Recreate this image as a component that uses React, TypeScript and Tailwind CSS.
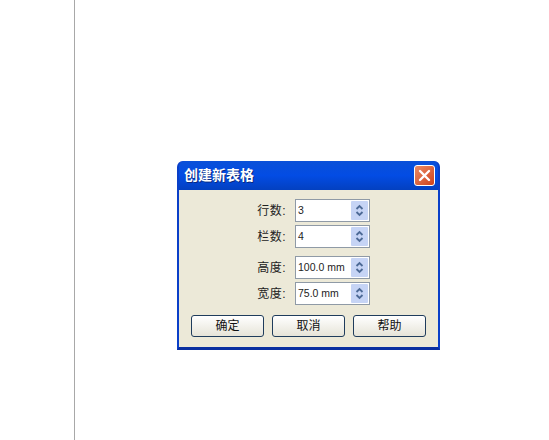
const sans = { fontFamily: '"Liberation Sans", "Noto Sans CJK SC", sans-serif' };

function Spinner() {
  return (
    <div className="w-[17px] h-[19px] bg-[#c6d4f5] rounded-[1px] flex items-center justify-center">
      <svg width="11" height="15" viewBox="0 0 11 15" fill="none" stroke="#4d6a96" strokeWidth="1.8">
        <path d="M2.5 6 L5.5 3 L8.5 6" />
        <path d="M2.5 9 L5.5 12 L8.5 9" />
      </svg>
    </div>
  );
}

function Field({ label, value, className }: { label: string; value: string; className?: string }) {
  return (
    <div className={'flex items-center h-[23px] ' + (className ?? '')}>
      <span className="w-[107px] text-right text-[12px] text-[#222] tracking-[0.5px]">{label}:</span>
      <div className="ml-[9px] w-[75px] h-[23px] bg-white border border-[#8f9aa6] flex items-center justify-between pl-[2px] pr-[1px]">
        <span className="text-[10.5px] text-[#222]">{value}</span>
        <Spinner />
      </div>
    </div>
  );
}

function Button({ label }: { label: string }) {
  return (
    <button className="w-[73px] h-[22px] rounded-[3px] border border-[#1f3c5c] bg-gradient-to-b from-white to-[#e6e4d8] text-[12px] text-[#111]">
      {label}
    </button>
  );
}

export default function App() {
  return (
    <div className="w-[549px] h-[440px] bg-white flex overflow-hidden" style={sans}>
      <div className="ml-[74px] w-px h-full bg-[#a8a8a8]" />
      <div className="ml-[102px] mt-[161px] w-[263px] h-[189px] flex flex-col rounded-t-[6px] bg-[#0a45d8] border-x-[2px] border-b-[3px] border-x-[#0a3fc8] border-b-[#0a2fa0]">
        <div className="h-[29px] flex items-center justify-between pl-[5px] pr-[3px] rounded-t-[6px] bg-gradient-to-b from-[#0a50d8] via-[#034ce4] to-[#0340c0]">
          <span className="text-[14px] font-bold text-white [text-shadow:1px_1px_0_#0a2a80]">创建新表格</span>
          <div className="w-[21px] h-[21px] rounded-[3px] border border-white bg-gradient-to-br from-[#ea8a64] to-[#cf4016] flex items-center justify-center">
            <svg width="13" height="13" viewBox="0 0 13 13" stroke="#fff" strokeWidth="2.4" strokeLinecap="round">
              <path d="M2 2 L11 11 M11 2 L2 11" />
            </svg>
          </div>
        </div>
        <div className="flex-1 bg-[#ece9d8] pt-[9px] flex flex-col">
          <Field label="行数" value="3" />
          <Field label="栏数" value="4" className="mt-[3px]" />
          <Field label="高度" value="100.0 mm" className="mt-[8px]" />
          <Field label="宽度" value="75.0 mm" className="mt-[3px]" />
          <div className="mt-[10px] pl-[12px] flex gap-[8px]">
            <Button label="确定" />
            <Button label="取消" />
            <Button label="帮助" />
          </div>
        </div>
      </div>
    </div>
  );
}
